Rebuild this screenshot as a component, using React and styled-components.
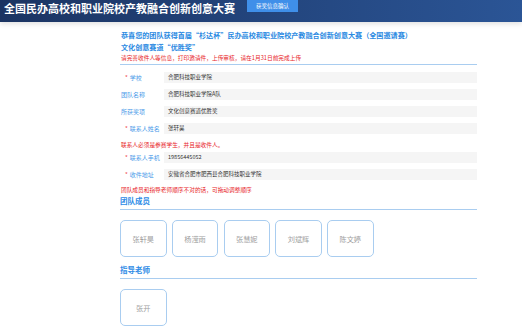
import React from "react";
import styled, { createGlobalStyle } from "styled-components";

const GlobalStyle = createGlobalStyle`
  html, body {
    margin: 0;
    padding: 0;
    background: #ffffff;
    font-family: "Noto Sans CJK SC", "Noto Sans", sans-serif;
  }
`;

const fields1 = [
  { label: "学校", value: "合肥科技职业学院", required: true },
  { label: "团队名称", value: "合肥科技职业学院A队" },
  { label: "所获奖项", value: "文化创意赛道优胜奖" },
  { label: "联系人姓名", value: "张轩昊", required: true },
];

const fields2 = [
  { label: "联系人手机", value: "19856445052", required: true },
  { label: "收件地址", value: "安徽省合肥市肥西县合肥科技职业学院", required: true },
];

const members = ["张轩昊", "杨滢雨", "张慧妮", "刘斌辉", "陈文婷"];
const teachers = ["张开"];

const App = () => {
  return (
    <>
      <GlobalStyle />
      <Header>
        <Title>全国民办高校和职业院校产教融合创新创意大赛</Title>
        <ConfirmButton>获奖信息确认</ConfirmButton>
      </Header>
      <Main>
        <Congrats>
          恭喜您的团队获得首届“杉达杯”民办高校和职业院校产教融合创新创意大赛（全国邀请赛）
          <br />
          文化创意赛道“优胜奖”
        </Congrats>
        <Note>请完善收件人等信息，打印邀请件，上传审核，请在1月31日前完成上传</Note>
        <Divider />
        <Form>
          {fields1.map((f) => (
            <Row key={f.label}>
              <Label $required={f.required}>{f.label}</Label>
              <Input>{f.value}</Input>
            </Row>
          ))}
          <Note $mt={5.5}>联系人必须是参赛学生，并且是收件人。</Note>
          <RowGroup>
            {fields2.map((f) => (
              <Row key={f.label}>
                <Label $required={f.required}>{f.label}</Label>
                <Input>{f.value}</Input>
              </Row>
            ))}
          </RowGroup>
          <Note $mt={5}>团队成员和指导老师顺序不对的话，可拖动调整顺序</Note>
        </Form>
        <Section>
          <SectionTitle>团队成员</SectionTitle>
          <Cards>
            {members.map((m) => (
              <Card key={m}>{m}</Card>
            ))}
          </Cards>
        </Section>
        <Section $mt={7.5}>
          <SectionTitle>指导老师</SectionTitle>
          <Cards>
            {teachers.map((m) => (
              <Card key={m}>{m}</Card>
            ))}
          </Cards>
        </Section>
      </Main>
    </>
  );
};

const Header = styled.div`
  height: 22px;
  display: flex;
  align-items: flex-start;
  background: linear-gradient(90deg, #1b3462 0%, #22437a 45%, #2b5596 100%);
  box-shadow: 0 2px 5px rgba(0, 0, 0, 0.12);
`;
const Title = styled.div`
  color: #ffffff;
  font-size: 11px;
  font-weight: 700;
  line-height: 14px;
  padding: 1px 0 0 4px;
  white-space: nowrap;
`;
const ConfirmButton = styled.div`
  margin-left: 12px;
  width: 51px;
  height: 12px;
  background: #3f8fe9;
  color: #ffffff;
  font-size: 5.5px;
  line-height: 12px;
  text-align: center;
`;
const Main = styled.div`
  margin-left: 120px;
  width: 357px;
  padding-top: 7px;
`;
const Congrats = styled.div`
  color: #2b8ae2;
  font-size: 7.1px;
  font-weight: 700;
  line-height: 12px;
  padding-left: 1px;
`;
const Note = styled.div`
  color: #e8262a;
  font-size: 5.7px;
  line-height: 9px;
  padding-left: 1px;
  margin-top: ${(p) => p.$mt || 0}px;
`;
const Divider = styled.div`
  margin-top: 2px;
  height: 1px;
  background: #a9cdf0;
`;
const Form = styled.div`
  padding-top: 7px;
  display: flex;
  flex-direction: column;
`;
const RowGroup = styled.div`
  margin-top: 3px;
  display: flex;
  flex-direction: column;
`;
const Row = styled.div`
  display: flex;
  align-items: center;
  height: 11px;
  & + & {
    margin-top: 6px;
  }
`;
const Label = styled.div`
  width: 44px;
  flex: none;
  box-sizing: border-box;
  padding-left: ${(p) => (p.$required ? 5 : 1)}px;
  color: #4b9be9;
  font-size: 6px;
  white-space: nowrap;
  &::before {
    content: ${(p) => (p.$required ? '"*"' : "none")};
    color: #f04b4b;
    margin-right: 2px;
  }
`;
const Input = styled.div`
  flex: 1;
  height: 11px;
  background: #f5f5f5;
  color: #333333;
  font-size: 5.5px;
  line-height: 11px;
  padding-left: 4px;
`;
const Section = styled.div`
  margin-top: ${(p) => p.$mt || 2}px;
`;
const SectionTitle = styled.div`
  color: #2d8be6;
  font-size: 7.5px;
  font-weight: 700;
  line-height: 10px;
  padding-bottom: 3px;
  border-bottom: 1px solid #a9cdf0;
`;
const Cards = styled.div`
  display: flex;
  gap: 5.25px;
  margin-top: 10.5px;
`;
const Card = styled.div`
  width: 46.5px;
  height: 37px;
  box-sizing: border-box;
  border: 1px solid #a9cdf0;
  border-radius: 5px;
  display: flex;
  align-items: center;
  justify-content: center;
  color: #a0a0a0;
  font-size: 7.2px;
`;

export default App;
